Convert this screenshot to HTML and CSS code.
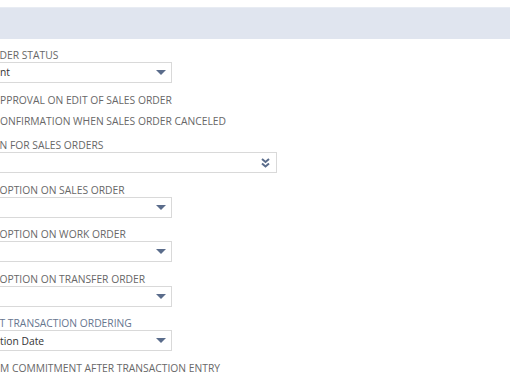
FILE: index.html
```html
<!DOCTYPE html>
<html>
<head>
    <meta charset="utf-8">
    <title>Order Management</title>
    <link rel="stylesheet" href="styles.css">
</head>
<body>
    <div class="page-header"></div>

    <div class="form">
        <div class="field">
            <label class="field-label">DER STATUS</label>
            <div class="select">
                <span class="select-value">nt</span>
                <svg class="select-arrow" width="10" height="5" viewBox="0 0 10 5"><path d="M0 0H10L5 5Z"/></svg>
            </div>
        </div>

        <div class="checks">
            <div class="check-row">PPROVAL ON EDIT OF SALES ORDER</div>
            <div class="check-row">ONFIRMATION WHEN SALES ORDER CANCELED</div>
        </div>

        <div class="field">
            <label class="field-label">N FOR SALES ORDERS</label>
            <div class="select select-wide">
                <span class="select-value"></span>
                <svg class="select-multi" width="9" height="10" viewBox="0 0 9 10"><path d="M1 1L4.5 4L8 1M1 5.5L4.5 8.5L8 5.5"/></svg>
            </div>
        </div>

        <div class="field">
            <label class="field-label">OPTION ON SALES ORDER</label>
            <div class="select">
                <span class="select-value"></span>
                <svg class="select-arrow" width="10" height="5" viewBox="0 0 10 5"><path d="M0 0H10L5 5Z"/></svg>
            </div>
        </div>

        <div class="field">
            <label class="field-label">OPTION ON WORK ORDER</label>
            <div class="select">
                <span class="select-value"></span>
                <svg class="select-arrow" width="10" height="5" viewBox="0 0 10 5"><path d="M0 0H10L5 5Z"/></svg>
            </div>
        </div>

        <div class="field">
            <label class="field-label">OPTION ON TRANSFER ORDER</label>
            <div class="select">
                <span class="select-value"></span>
                <svg class="select-arrow" width="10" height="5" viewBox="0 0 10 5"><path d="M0 0H10L5 5Z"/></svg>
            </div>
        </div>

        <div class="field">
            <label class="field-label field-label-link">T TRANSACTION ORDERING</label>
            <div class="select">
                <span class="select-value">tion Date</span>
                <svg class="select-arrow" width="10" height="5" viewBox="0 0 10 5"><path d="M0 0H10L5 5Z"/></svg>
            </div>
        </div>

        <div class="checks">
            <div class="check-row">M COMMITMENT AFTER TRANSACTION ENTRY</div>
        </div>
    </div>
</body>
</html>
```
FILE: styles.css
```css
body {
    margin: 0;
    overflow: hidden;
    background: white;
    font-family: "Open Sans", "Liberation Sans", sans-serif;
    font-size: 10.3px;
    color: #686868;
}

.page-header {
    margin-top: 7px;
    height: 32px;
    background: #e0e5ef;
    border-top: 1px solid #e8ecf3;
    box-sizing: border-box;
}

.form {
    margin-left: -6px;
    padding-top: 8.5px;
}

.field + .field {
    margin-top: 9.5px;
}

.field-label {
    display: block;
    height: 14px;
    line-height: 14px;
    padding-left: 5.5px;
    white-space: nowrap;
}

.field-label-link {
    color: #67768f;
}

.select {
    display: flex;
    align-items: center;
    justify-content: space-between;
    box-sizing: border-box;
    width: 178px;
    height: 21px;
    padding: 0 5px 0 5px;
    background: white;
    border: 1px solid #d9d9d9;
}

.select-wide {
    width: 283px;
}

.select-value {
    line-height: 14px;
    color: #333;
    white-space: nowrap;
}

.select-arrow {
    fill: #5a6c8b;
}

.select-multi {
    fill: none;
    stroke: #5a6c8b;
    stroke-width: 2;
    margin-right: 1px;
}

.checks {
    margin: 7px 0 5.5px;
}

.check-row {
    height: 21.5px;
    line-height: 21.5px;
    padding-left: 6px;
    white-space: nowrap;
}
```
